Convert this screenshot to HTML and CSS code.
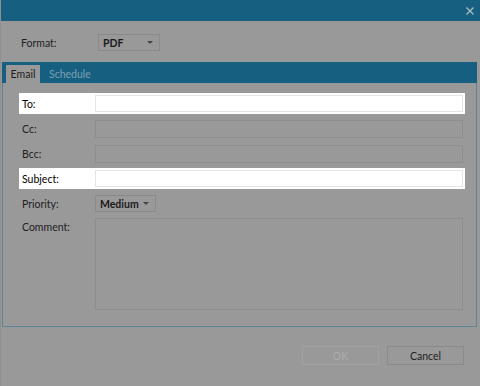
FILE: index.html
```html
<!DOCTYPE html>
<html>
<head>
<meta charset="utf-8">
<link rel="stylesheet" href="styles.css">
</head>
<body>
<div class="dialog">
  <div class="titlebar">
    <svg class="close" width="8" height="8" viewBox="0 0 8 8"><path d="M0.5 0.5L7.5 7.5M7.5 0.5L0.5 7.5" stroke="#a9bcc6" stroke-width="1.3" fill="none"/></svg>
  </div>
  <div class="format-row">
    <span class="format-label">Format:</span>
    <div class="select format-select"><span class="select-text">PDF</span><span class="caret"></span></div>
  </div>
  <div class="tabs">
    <div class="tab active">Email</div>
    <div class="tab">Schedule</div>
  </div>
  <div class="panel">
    <div class="row hl"><span class="label">To:</span><div class="input light"></div></div>
    <div class="row"><span class="label">Cc:</span><div class="input"></div></div>
    <div class="row"><span class="label">Bcc:</span><div class="input"></div></div>
    <div class="row hl"><span class="label">Subject:</span><div class="input light"></div></div>
    <div class="row"><span class="label">Priority:</span><div class="select priority-select"><span class="select-text">Medium</span><span class="caret"></span></div></div>
    <div class="row comment-row"><span class="label">Comment:</span><div class="textarea"></div></div>
  </div>
  <div class="footer">
    <div class="btn disabled">OK</div>
    <div class="btn">Cancel</div>
  </div>
</div>
</body>
</html>
```

FILE: styles.css
```css
* { box-sizing: border-box; }
html, body { margin: 0; padding: 0; }
body {
  width: 480px;
  height: 386px;
  background: #999999;
  font-family: "Lato", "Open Sans", sans-serif;
  font-size: 10.5px;
  color: #1e1e1e;
  overflow: hidden;
}
.dialog {
  width: 480px;
  height: 386px;
  border-left: 1px solid #8f8f8f;
  display: flex;
  flex-direction: column;
}
.titlebar {
  height: 21px;
  background: #175f80;
  display: flex;
  justify-content: flex-end;
  align-items: center;
  padding-right: 6px;
}
.close { display: block; }
.format-row {
  height: 41px;
  display: flex;
  align-items: center;
  padding-left: 20px;
  padding-top: 2px;
}
.format-label { width: 77px; }
.select {
  height: 17px;
  border: 1px solid #8a8a8a;
  display: flex;
  align-items: center;
  padding-left: 4px;
  padding-right: 6px;
  justify-content: space-between;
}
.select-text { font-weight: 700; color: #1a1a1a; }
.caret {
  width: 0; height: 0;
  border-left: 3px solid transparent;
  border-right: 3px solid transparent;
  border-top: 3px solid #444;
}
.format-select { width: 62px; }
.priority-select { width: 61px; }
.tabs {
  height: 21px;
  margin: 0 3px 0 1px;
  background: #175f80;
  display: flex;
  align-items: flex-end;
  padding-left: 4px;
}
.tab {
  height: 18px;
  padding: 0 6px;
  display: flex;
  align-items: center;
  color: #7d9fb1;
}
.tab.active {
  background: #999999;
  color: #1e1e1e;
  width: 34px;
  justify-content: center;
  padding: 0;
  margin-right: 3px;
}
.panel {
  margin: 0 3px 0 1px;
  border: 1px solid #5f8396;
  border-top: none;
  padding: 10px 11px 16px 16px;
  display: flex;
  flex-direction: column;
  gap: 4px;
}
.row {
  height: 21px;
  display: flex;
  align-items: center;
  padding: 0 2px 0 3px;
}
.row.hl { background: #ffffff; color: #000; }
.label { width: 73px; flex: none; }
.input {
  flex: 1;
  height: 18px;
  border: 1px solid #8e8e8e;
}
.input.light { border-color: #e4e4e4; height: 17px; }
.comment-row { height: auto; align-items: flex-start; }
.comment-row .label { padding-top: 3px; }
.textarea {
  flex: 1;
  height: 92px;
  border: 1px solid #8e8e8e;
}
.footer {
  display: flex;
  justify-content: flex-end;
  gap: 8px;
  padding: 19px 16px 0 0;
}
.btn {
  width: 77px;
  height: 19px;
  border: 1px solid #8a8a8a;
  display: flex;
  align-items: center;
  justify-content: center;
  color: #1e1e1e;
}
.btn.disabled { color: #adadad; border-color: #a2a2a2; }
```
